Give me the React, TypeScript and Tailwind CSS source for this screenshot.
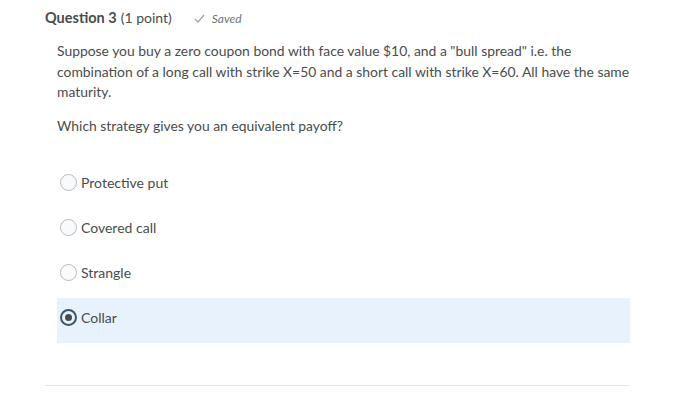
import React from "react";

const options = ["Protective put", "Covered call", "Strangle", "Collar"];

export default function App() {
  return (
    <div className="w-[700px] h-[410px] bg-white text-[#494c4e] overflow-hidden" style={{ fontFamily: "Lato, 'Open Sans', sans-serif" }}>
      <div className="pl-[45px] pt-[8px] flex items-baseline">
        <span className="text-[14.5px] font-bold leading-[20px]">Question 3</span>
        <span className="text-[14px] leading-[20px] ml-[4px]">(1 point)</span>
        <span className="ml-[22px] flex items-center text-[12px] italic text-[#6e7376]">
          <svg width="11" height="9" viewBox="0 0 11 9" className="mr-[7px]">
            <path d="M1 5 L4 8 L10 1" fill="none" stroke="#9ea3a6" strokeWidth="1.2" />
          </svg>
          Saved
        </span>
      </div>
      <div className="pl-[57px] w-[634px] mt-[13px] text-[13.9px] leading-[20.5px]">
        <p>
          Suppose you buy a zero coupon bond with face value $10, and a "bull spread" i.e. the combination of a long call with strike X=50 and a short call with strike X=60. All have the same maturity.
        </p>
        <p className="mt-[13px]">Which strategy gives you an equivalent payoff?</p>
      </div>
      <div className="mt-[27px] pl-[57px] w-[630px] flex flex-col">
        {options.map((o, i) => {
          const sel = i === 3;
          return (
            <div key={o} className={`h-[45px] flex items-center pl-[3px] pb-[7px] ${sel ? "bg-[#e8f2fc]" : ""}`}>
              {sel ? (
                <span className="w-[17px] h-[17px] rounded-full border-[2px] border-[#3b5668] flex items-center justify-center">
                  <span className="w-[7px] h-[7px] rounded-full bg-[#494c4e]" />
                </span>
              ) : (
                <span className="w-[17px] h-[17px] rounded-full border border-[#b7bbbe] bg-[#f9fafb]" />
              )}
              <span className="ml-[4px] text-[14px]">{o}</span>
            </div>
          );
        })}
      </div>
      <div className="ml-[45px] w-[585px] mt-[42px] h-[1px] bg-[#e3e5e6]" />
    </div>
  );
}
